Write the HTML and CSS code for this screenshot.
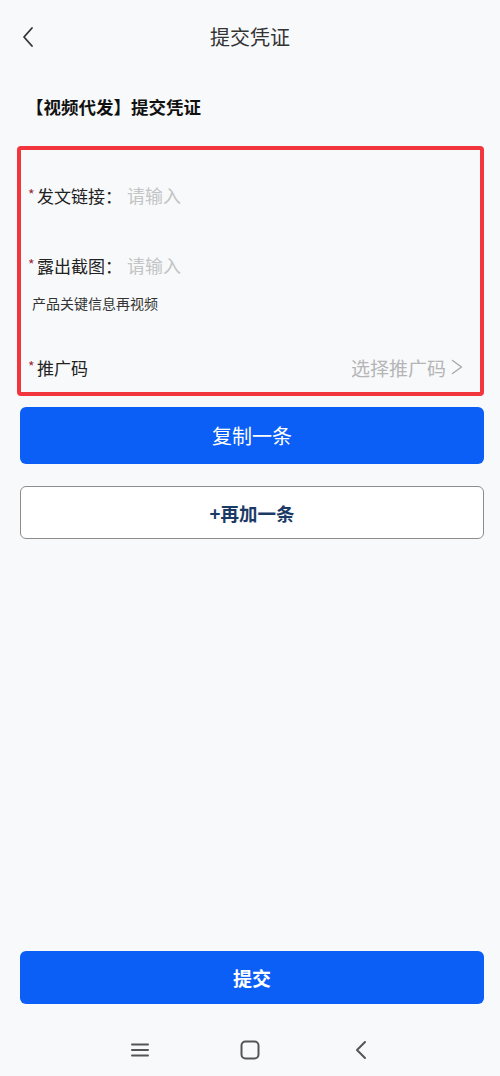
FILE: index.html
```html
<!DOCTYPE html>
<html lang="zh">
<head>
<meta charset="utf-8">
<link rel="stylesheet" href="styles.css">
</head>
<body>
<div class="page">
  <header class="topbar">
    <span class="back">
      <svg width="14" height="22" viewBox="0 0 14 22"><path d="M11 2 L3 11 L11 20" fill="none" stroke="#333" stroke-width="1.8" stroke-linecap="round" stroke-linejoin="round"/></svg>
    </span>
    <h1 class="title">提交凭证</h1>
    <span></span>
  </header>

  <h2 class="heading">【视频代发】提交凭证</h2>

  <section class="form-box">
    <div class="row">
      <span class="req">*</span><span class="label">发文链接：</span><span class="ph">请输入</span>
    </div>
    <div class="row row2">
      <span class="req">*</span><span class="label">露出截图：</span><span class="ph">请输入</span>
    </div>
    <div class="hint">产品关键信息再视频</div>
    <div class="row row3">
      <span class="req">*</span><span class="label">推广码</span>
      <span class="select">选择推广码
        <svg width="12" height="16" viewBox="0 0 12 16"><path d="M1.5 1.5 L10.5 8 L1.5 14.5" fill="none" stroke="#aaa" stroke-width="1.5" stroke-linecap="round" stroke-linejoin="round"/></svg>
      </span>
    </div>
  </section>

  <button class="btn btn-primary copy">复制一条</button>
  <button class="btn btn-outline">+再加一条</button>

  <div class="spacer"></div>

  <button class="btn btn-primary submit">提交</button>

  <nav class="navbar">
    <svg width="20" height="16" viewBox="0 0 20 16"><path d="M2 2.5H18M2 8H18M2 13.5H18" stroke="#555" stroke-width="2" stroke-linecap="round"/></svg>
    <svg width="20" height="20" viewBox="0 0 20 20"><rect x="1.5" y="1.5" width="17" height="17" rx="4" fill="none" stroke="#555" stroke-width="2"/></svg>
    <svg width="20" height="20" viewBox="0 0 20 20"><path d="M15 2 L7 10 L15 18" fill="none" stroke="#555" stroke-width="2" stroke-linecap="round" stroke-linejoin="round"/></svg>
  </nav>
</div>
</body>
</html>
```

FILE: styles.css
```css
* { box-sizing: border-box; }
html, body {
  margin: 0;
  padding: 0;
  background: #f8f9fb;
  font-family: "Noto Sans CJK SC", "Noto Sans", sans-serif;
  color: #222;
}
.page {
  height: 1076px;
  display: flex;
  flex-direction: column;
  overflow: hidden;
}
.topbar {
  height: 74px;
  display: grid;
  grid-template-columns: 1fr auto 1fr;
  align-items: center;
}
.back {
  display: flex;
  align-items: center;
  padding-left: 21px;
}
.title {
  margin: 0;
  font-size: 20px;
  font-weight: 400;
  color: #333;
  line-height: 1;
}
.heading {
  margin: 21px 0 0 26px;
  font-size: 17.5px;
  font-weight: 700;
  line-height: 24px;
  color: #111;
}
.form-box {
  margin: 27px 16px 0 17px;
  border: 4px solid #f3353d;
  border-radius: 4px;
  padding: 33px 16px 13px 6px;
}
.row {
  display: flex;
  align-items: center;
  height: 24px;
}
.row2 { margin-top: 46px; }
.row3 { margin-top: 42px; }
.req {
  width: 10px;
  color: #9b2a3a;
  font-size: 14px;
  align-self: flex-start;
  line-height: 14px;
  padding-top: 4px;
  padding-left: 1px;
}
.label {
  font-size: 17px;
  color: #222;
  width: 90px;
  white-space: nowrap;
}
.ph {
  font-size: 18px;
  color: #c4c4c4;
}
.hint {
  margin-top: 16px;
  padding-left: 5px;
  font-size: 14px;
  line-height: 20px;
  color: #333;
}
.select {
  margin-left: auto;
  display: flex;
  align-items: center;
  gap: 5px;
  font-size: 19px;
  color: #b5b5b5;
  margin-right: 1px;
}
.btn {
  display: block;
  font-family: inherit;
  margin: 0 16px 0 20px;
  border-radius: 6px;
  cursor: pointer;
}
.btn-primary {
  background: #0b5ef6;
  border: none;
  color: #fff;
}
.copy {
  margin-top: 11px;
  height: 57px;
  font-size: 20px;
}
.btn-outline {
  margin-top: 22px;
  height: 53px;
  background: #fff;
  border: 1px solid #8c8c8c;
  color: #1c3a66;
  font-size: 18.5px;
  font-weight: 700;
}
.spacer { flex: 1; }
.submit {
  height: 53px;
  font-size: 19px;
  font-weight: 700;
}
.navbar {
  height: 72px;
  display: flex;
  align-items: center;
  justify-content: center;
  gap: 90px;
  padding-top: 20px;
}
```
